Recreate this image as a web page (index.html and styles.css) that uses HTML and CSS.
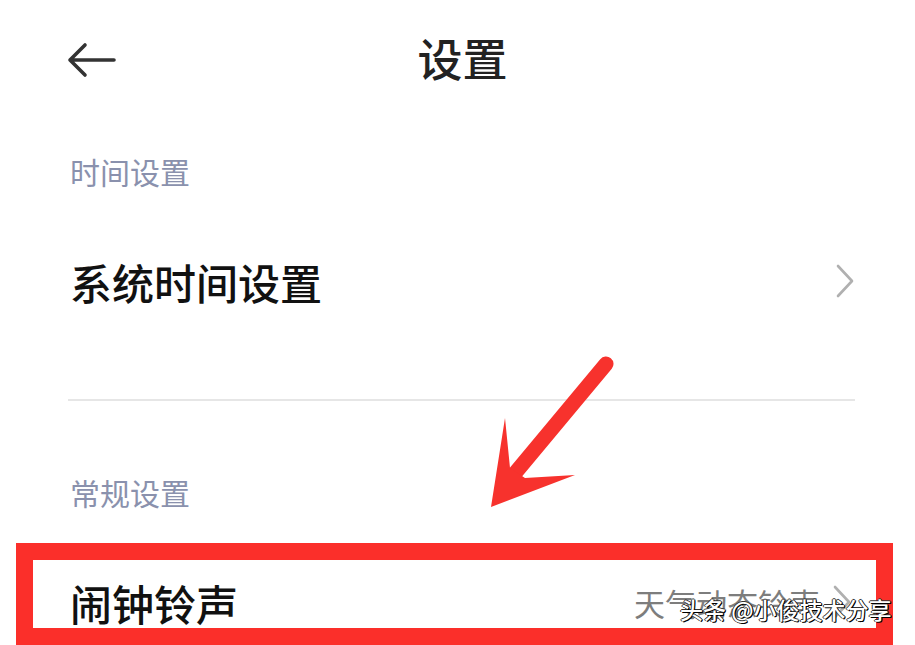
FILE: index.html
```html
<!DOCTYPE html>
<html lang="zh-CN">
<head>
  <meta charset="UTF-8">
  <title>设置</title>
  <link rel="stylesheet" href="styles.css">
</head>
<body>
  <div class="page">
    <div class="topbar">
      <svg class="back" width="52" height="40" viewBox="0 0 52 40">
        <path d="M48 19 H4 M19 4 L4 19 L19 34" fill="none" stroke="#333" stroke-width="3.6" stroke-linecap="round" stroke-linejoin="round"/>
      </svg>
      <h1 class="title">设置</h1>
    </div>

    <div class="group-label first">时间设置</div>
    <div class="row tall">
      <span class="row-name">系统时间设置</span>
      <svg class="chev" width="20" height="34" viewBox="0 0 20 34"><path d="M3 2 L17 17 L3 32" fill="none" stroke="#b0b0b0" stroke-width="2.6" stroke-linecap="round" stroke-linejoin="round"/></svg>
    </div>
    <div class="divider"></div>

    <div class="group-label second">常规设置</div>
    <div class="row marked">
      <span class="row-name">闹钟铃声</span>
      <span class="row-value">天气动态铃声</span>
      <svg class="chev" width="20" height="34" viewBox="0 0 20 34"><path d="M3 2 L17 17 L3 32" fill="none" stroke="#b0b0b0" stroke-width="2.6" stroke-linecap="round" stroke-linejoin="round"/></svg>
    </div>

    <!-- 标注箭头 -->
    <svg class="pointer" width="915" height="645" viewBox="0 0 915 645">
      <line x1="606" y1="364" x2="516" y2="472" stroke="#f7322d" stroke-width="15" stroke-linecap="round"/>
      <polygon points="491,507 505,418 510,468 525,478 575,475" fill="#f7322d"/>
    </svg>

    <div class="watermark">头条 @小俊技术分享</div>
  </div>
</body>
</html>
```

FILE: styles.css
```css
body {
  margin: 0;
  background: #fff;
  font-family: "Noto Sans CJK SC", "Noto Sans", sans-serif;
  overflow: hidden;
}

.page {
  position: relative;
  width: 915px;
  height: 645px;
  overflow: hidden;
}

.topbar {
  height: 124px;
  display: flex;
  align-items: center;
  justify-content: center;
  position: relative;
}
.back {
  position: absolute;
  left: 66px;
  top: 41px;
}
.title {
  margin: 0 0 10px 10px;
  font-size: 45px;
  font-weight: 500;
  color: #222;
  line-height: 1;
}

.group-label {
  padding-left: 70px;
  font-size: 30px;
  line-height: 34px;
  color: #8a91ad;
}
.group-label.first { padding-top: 30px; }
.group-label.second { padding-top: 74px; }

.row {
  display: flex;
  align-items: center;
  padding: 0 60px 0 70px;
}
.row.tall {
  height: 126px;
  margin-top: 30px;
}
.row-name {
  font-size: 42px;
  font-weight: 500;
  color: #111;
  flex: 1;
}
.row-value {
  font-size: 31px;
  color: #7d7d7d;
  margin-right: 12px;
}

.divider {
  height: 2px;
  background: #e6e6e6;
  margin: 55px 60px 0 68px;
}

.row.marked {
  box-sizing: border-box;
  margin: 34px 0 0 16px;
  width: 877px;
  height: 102px;
  border: 17px solid #fb2f2a;
  padding: 16px 24px 0 37px;
}

.pointer {
  position: absolute;
  left: 0;
  top: 0;
  pointer-events: none;
}

.watermark {
  position: absolute;
  left: 680px;
  top: 592px;
  font-size: 23px;
  font-weight: 500;
  color: #fff;
  text-shadow: 1px 1px 0 #000, -1px 0 0 #333, 0 -1px 0 #333, 1px 0 0 #000;
  white-space: nowrap;
}
```
